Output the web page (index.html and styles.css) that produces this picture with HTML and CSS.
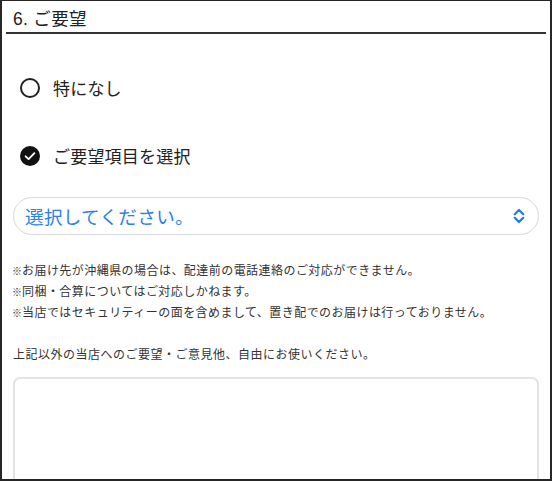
FILE: index.html
```html
<!DOCTYPE html>
<html lang="ja">
<head>
<meta charset="utf-8">
<link rel="stylesheet" href="styles.css">
</head>
<body>
<div class="frame">
  <h2 class="heading">6. ご要望</h2>
  <div class="options">
    <label class="option">
      <span class="radio"></span>
      <span class="option-label">特になし</span>
    </label>
    <label class="option">
      <span class="radio checked">
        <svg width="20" height="20" viewBox="0 0 20 20"><circle cx="10" cy="10" r="10" fill="#111"/><path d="M5.6 10.3 L8.6 13.1 L14.4 7.1" fill="none" stroke="#fff" stroke-width="1.8" stroke-linecap="round" stroke-linejoin="round"/></svg>
      </span>
      <span class="option-label">ご要望項目を選択</span>
    </label>
  </div>
  <div class="select">
    <span class="select-text">選択してください。</span>
    <svg class="chev" width="12" height="16" viewBox="0 0 12 16"><path d="M1.8 6.2 L6 2 L10.2 6.2 M1.8 9.8 L6 14 L10.2 9.8" fill="none" stroke="#1f7be6" stroke-width="2.2" stroke-linecap="round" stroke-linejoin="round"/></svg>
  </div>
  <div class="notes">
    <p><span class="mark">※</span>お届け先が沖縄県の場合は、配達前の電話連絡のご対応ができません。</p>
    <p><span class="mark">※</span>同梱・合算についてはご対応しかねます。</p>
    <p><span class="mark">※</span>当店ではセキュリティーの面を含めまして、置き配でのお届けは行っておりません。</p>
  </div>
  <p class="lead">上記以外の当店へのご要望・ご意見他、自由にお使いください。</p>
  <div class="textarea"></div>
</div>
</body>
</html>
```

FILE: styles.css
```css
html, body {
  margin: 0;
  padding: 0;
  background: #fff;
}
body {
  font-family: "Noto Sans CJK JP", "Noto Sans", sans-serif;
  color: #222;
}
.frame {
  box-sizing: border-box;
  width: 552px;
  height: 481px;
  border: 2px solid #262626;
  border-top-width: 1px;
  overflow: hidden;
}
.heading {
  margin: 0 4px;
  padding: 5px 0 0 7px;
  font-family: "Liberation Sans", "Noto Sans CJK JP", sans-serif;
  font-size: 17.5px;
  font-weight: normal;
  line-height: 26px;
  letter-spacing: 0.3px;
  border-bottom: 2px solid #333;
}
.options {
  display: flex;
  flex-direction: column;
  gap: 28px;
  padding: 34px 0 0 18px;
}
.option {
  display: flex;
  align-items: center;
  height: 40px;
  gap: 13px;
}
.radio {
  box-sizing: border-box;
  width: 20px;
  height: 20px;
  border: 2px solid #222;
  border-radius: 50%;
  display: flex;
}
.radio.checked {
  border: none;
}
.option-label {
  font-size: 17px;
  line-height: 24px;
  letter-spacing: 0.2px;
}
.select {
  box-sizing: border-box;
  margin: 21px 11px 0;
  height: 38px;
  border: 1px solid #d9d9d9;
  border-radius: 19px;
  display: flex;
  align-items: center;
  justify-content: space-between;
  padding: 0 13px 0 11px;
}
.select-text {
  color: #2a82e4;
  font-size: 18.6px;
  line-height: 24px;
  letter-spacing: 0.3px;
}
.chev {
  display: block;
}
.notes {
  margin: 25px 0 0 10px;
  font-size: 12px;
  line-height: 20px;
  color: #333;
  letter-spacing: 0.45px;
}
.notes p {
  margin: 0;
}
.mark {
  font-size: 10px;
  letter-spacing: 0;
}
.lead {
  margin: 21px 0 0 11px;
  font-size: 12px;
  line-height: 20px;
  color: #333;
  letter-spacing: 0.5px;
}
.textarea {
  margin: 13px 11px 0;
  height: 200px;
  border: 2px solid #e2e2e2;
  border-radius: 7px;
}
```
